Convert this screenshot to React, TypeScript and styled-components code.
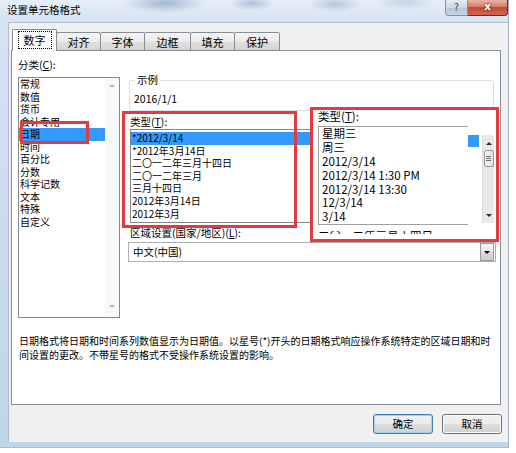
import React from "react";
import styled, { createGlobalStyle } from "styled-components";

const FONT = `"Noto Sans CJK SC", "Microsoft YaHei", "Noto Sans", sans-serif`;
const RED = "#e23a3f";
const SEL = "#3399ff";

const GlobalStyle = createGlobalStyle`
  html, body { margin: 0; padding: 0; background: #ffffff; }
  body { font-family: ${FONT}; color: #000; }
  * { box-sizing: border-box; }
`;

const Window = styled.div`
  width: 509px;
  height: 448px;
  display: flex;
  flex-direction: column;
  background:
    radial-gradient(ellipse 42px 10px at 165px 3px, rgba(110, 140, 178, 0.55), transparent),
    radial-gradient(ellipse 22px 8px at 252px 3px, rgba(110, 140, 178, 0.45), transparent),
    radial-gradient(ellipse 26px 8px at 335px 4px, rgba(110, 140, 178, 0.4), transparent),
    radial-gradient(ellipse 30px 8px at 405px 2px, rgba(140, 165, 195, 0.35), transparent),
    linear-gradient(180deg, #e6eef8 0%, #d6e3f2 20px, #c9daee 60%, #c0d4ea 100%);
  border-right: 1px solid #a3b1c2;
  border-bottom: 1px solid #a9bdd4;
`;

const TitleBar = styled.div`
  height: 22px;
  display: flex;
  align-items: flex-start;
`;

const TitleText = styled.div`
  padding-left: 7px;
  font-size: 10.5px;
  line-height: 20px;
  color: #000;
`;

const Controls = styled.div`
  margin-left: auto;
  display: flex;
`;

const HelpButton = styled.div`
  width: 23px;
  height: 16px;
  border: 1px solid #8091a8;
  border-top: none;
  border-radius: 0 0 0 4px;
  background: linear-gradient(180deg, #e6ecf3 0%, #cdd7e3 50%, #b7c5d6 51%, #c9d5e3 100%);
  color: #3d4a5c;
  font-family: "DejaVu Sans", sans-serif;
  font-size: 10px;
  line-height: 15px;
  text-align: center;
`;

const CloseButton = styled.div`
  width: 40px;
  height: 16px;
  border: 1px solid #6b2b20;
  border-left: none;
  border-top: none;
  border-radius: 0 0 4px 0;
  background: linear-gradient(180deg, #eab3a6 0%, #d77b66 45%, #c44a30 50%, #d0674c 100%);
  color: #fff;
  font-family: "DejaVu Sans", sans-serif;
  font-weight: bold;
  font-size: 11px;
  line-height: 14px;
  text-align: center;
  text-shadow: 0 0 2px #5a1a10, 0 0 1px #5a1a10;
`;

const Body = styled.div`
  flex: 1;
  margin: 0 0 5px 8px;
  background: #f0f0f0;
  border-top: 1px solid #aebdcf;
  border-left: 1px solid #aebdcf;
  padding: 6px 0 0 2px;
  display: flex;
  flex-direction: column;
`;

const TabStrip = styled.div`
  display: flex;
  align-items: flex-end;
  height: 22px;
  margin-left: 1px;
  margin-bottom: -1px;
  position: relative;
  z-index: 1;
`;

const Tab = styled.div<{ $w: number; $active?: boolean }>`
  width: ${(p) => p.$w}px;
  height: ${(p) => (p.$active ? 22 : 19)}px;
  margin-left: -1px;
  &:first-child { margin-left: 0; }
  border: 1px solid #898c95;
  border-bottom: ${(p) => (p.$active ? "none" : "1px solid #898c95")};
  border-radius: 2px 2px 0 0;
  background: ${(p) =>
    p.$active ? "#ffffff" : "linear-gradient(180deg, #f4f4f4 0%, #ebebeb 50%, #dddddd 51%, #d6d6d6 100%)"};
  display: flex;
  align-items: center;
  justify-content: center;
  font-size: 11px;
  line-height: 14px;
  position: relative;
  z-index: ${(p) => (p.$active ? 2 : 1)};
  padding-bottom: ${(p) => (p.$active ? 2 : 0)}px;
`;

const FocusText = styled.span`
  border: 1px dotted #000;
  padding: 1px 5px;
`;

const Panel = styled.div`
  position: relative;
  width: 490px;
  height: 355px;
  border: 1px solid #898c95;
  background: #ffffff;
  padding: 7px 4px 0 6px;
`;

const ContentGrid = styled.div`
  display: grid;
  grid-template-columns: 102px 1fr;
  column-gap: 8px;
  height: 260px;
`;

const Column = styled.div`
  display: flex;
  flex-direction: column;
`;

const Label = styled.div<{ $indent?: number; $gap?: number }>`
  font-size: 10.5px;
  line-height: 14px;
  margin-left: ${(p) => p.$indent ?? 0}px;
  margin-top: ${(p) => p.$gap ?? 0}px;
`;

const CategoryBox = styled.div`
  margin-top: 5px;
  height: 241px;
  border: 1px solid #828790;
  display: flex;
  background: #fff;
`;

const Items = styled.div<{ $pt?: number }>`
  flex: 1;
  padding-top: ${(p) => p.$pt ?? 0}px;
  overflow: hidden;
`;

const Item = styled.div<{ $selected?: boolean; $lh: number; $fs: number; $pl?: number }>`
  font-size: ${(p) => p.$fs}px;
  line-height: ${(p) => p.$lh}px;
  height: ${(p) => p.$lh}px;
  padding-left: ${(p) => p.$pl ?? 1}px;
  white-space: nowrap;
  background: ${(p) => (p.$selected ? SEL : "transparent")};
  color: #000;
`;

const DisabledScroll = styled.div`
  width: 14px;
  background: #f9f9f9;
  display: flex;
  flex-direction: column;
  justify-content: space-between;
  align-items: center;
  padding: 6px 0 9px;
`;

const ArrowUp = styled.span<{ $c: string }>`
  width: 0;
  height: 0;
  border-left: 3px solid transparent;
  border-right: 3px solid transparent;
  border-bottom: 3px solid ${(p) => p.$c};
`;

const ArrowDown = styled.span<{ $c: string }>`
  width: 0;
  height: 0;
  border-left: 3px solid transparent;
  border-right: 3px solid transparent;
  border-top: 3px solid ${(p) => p.$c};
`;

const SampleGroup = styled.fieldset`
  margin: 15px 2px 0 1px;
  padding: 5px 4px 4px 4px;
  border: 1px solid #dcdfe3;
  border-radius: 3px;
  min-width: 0;
`;

const SampleLegend = styled.legend`
  font-size: 10.5px;
  line-height: 14px;
  padding: 0 2px;
  margin-left: 1px;
`;

const SampleValue = styled.div`
  font-size: 10.5px;
  line-height: 14px;
`;

const TypeList = styled.div`
  margin-left: 2px;
  width: 365px;
  height: 94px;
  border: 1px solid #828790;
  display: flex;
  background: #fff;
`;

const Combo = styled.div`
  margin-top: 2px;
  height: 20px;
  border: 1px solid #abadb3;
  background: #fff;
  display: flex;
  align-items: center;
  padding: 0 1px 0 4px;
`;

const ComboText = styled.div`
  flex: 1;
  font-size: 10.5px;
  line-height: 14px;
`;

const ComboButton = styled.div`
  width: 14px;
  height: 18px;
  border: 1px solid #9c9c9c;
  background: linear-gradient(180deg, #f4f4f4 0%, #e8e8e8 50%, #d8d8d8 51%, #cfcfcf 100%);
  display: flex;
  align-items: center;
  justify-content: center;
`;

const Description = styled.div`
  margin-top: 16px;
  font-size: 10px;
  line-height: 14px;
  padding-left: 1px;
`;

const RedMark = styled.div<{ $x: number; $y: number; $w: number; $h: number }>`
  position: absolute;
  left: ${(p) => p.$x}px;
  top: ${(p) => p.$y}px;
  width: ${(p) => p.$w}px;
  height: ${(p) => p.$h}px;
  border: 3px solid ${RED};
  pointer-events: none;
`;

const Pasted = styled(RedMark)`
  background: #ffffff;
  display: flex;
  flex-direction: column;
`;

const PastedLabel = styled.div`
  font-size: 11.5px;
  line-height: 13px;
  padding-left: 5px;
`;

const PastedRow = styled.div`
  margin-top: 3px;
  display: flex;
  align-items: flex-start;
  padding-left: 5px;
`;

const PastedList = styled.div`
  width: 150px;
  height: 99px;
  border: 1px solid #a0a0a0;
  border-right: none;
  overflow: hidden;
`;

const BluePatch = styled.div`
  margin-top: 9px;
  width: 11px;
  height: 12px;
  background: ${SEL};
`;

const ActiveScroll = styled.div`
  margin-left: 3px;
  margin-top: 9px;
  width: 12px;
  height: 88px;
  background: #e8e8e8;
  border-left: 1px solid #dcdcdc;
  display: flex;
  flex-direction: column;
  align-items: center;
  padding-top: 7px;
  padding-bottom: 6px;
`;

const Thumb = styled.div`
  margin-top: 5px;
  width: 10px;
  height: 17px;
  border: 1px solid #979797;
  border-radius: 2px;
  background: linear-gradient(90deg, #f3f3f3, #e0e0e0);
  display: flex;
  flex-direction: column;
  align-items: center;
  justify-content: center;
  gap: 1px;
`;

const GripLine = styled.span`
  width: 5px;
  height: 1px;
  background: #6e6e6e;
`;

const ScrollSpacer = styled.div`
  flex: 1;
`;

const ClipLine = styled.div`
  margin-top: 6px;
  padding-left: 5px;
  height: 3px;
  overflow: hidden;
`;

const ClipText = styled.div`
  margin-top: -3px;
  font-size: 11.5px;
  line-height: 14px;
  white-space: nowrap;
`;

const ButtonRow = styled.div`
  margin-top: 9px;
  margin-right: 6px;
  display: flex;
  justify-content: flex-end;
  gap: 9px;
`;

const Button = styled.div<{ $default?: boolean }>`
  width: 60px;
  height: 20px;
  border: 1px solid ${(p) => (p.$default ? "#3c7fb1" : "#707070")};
  border-radius: 3px;
  box-shadow: ${(p) => (p.$default ? "inset 0 0 0 1px #9fd4f3" : "inset 0 0 0 1px #fbfbfb")};
  background: linear-gradient(180deg, #f2f2f2 0%, #ebebeb 50%, #dddddd 51%, #cfcfcf 100%);
  font-size: 10.5px;
  line-height: 18px;
  text-align: center;
`;

const categories = ["常规", "数值", "货币", "会计专用", "日期", "时间", "百分比", "分数", "科学记数", "文本", "特殊", "自定义"];
const types = ["*2012/3/14", "*2012年3月14日", "二〇一二年三月十四日", "二〇一二年三月", "三月十四日", "2012年3月14日", "2012年3月"];
const pastedTypes = ["星期三", "周三", "2012/3/14", "2012/3/14 1:30 PM", "2012/3/14 13:30", "12/3/14", "3/14"];
const tabs = [
  { label: "数字", w: 45 },
  { label: "对齐", w: 45 },
  { label: "字体", w: 45 },
  { label: "边框", w: 47 },
  { label: "填充", w: 45 },
  { label: "保护", w: 46 },
];

export default function App() {
  return (
    <>
      <GlobalStyle />
      <Window>
        <TitleBar>
          <TitleText>设置单元格格式</TitleText>
          <Controls>
            <HelpButton>?</HelpButton>
            <CloseButton>x</CloseButton>
          </Controls>
        </TitleBar>
        <Body>
          <TabStrip>
            {tabs.map((t, i) => (
              <Tab key={t.label} $w={t.w} $active={i === 0}>
                {i === 0 ? <FocusText>{t.label}</FocusText> : t.label}
              </Tab>
            ))}
          </TabStrip>
          <Panel>
            <ContentGrid>
              <Column>
                <Label>分类(<u>C</u>):</Label>
                <CategoryBox>
                  <Items>
                    {categories.map((c) => (
                      <Item key={c} $fs={10} $lh={12.5} $selected={c === "日期"}>
                        {c}
                      </Item>
                    ))}
                  </Items>
                  <DisabledScroll>
                    <ArrowUp $c="#b4b4b4" />
                    <ArrowDown $c="#b4b4b4" />
                  </DisabledScroll>
                </CategoryBox>
              </Column>
              <Column>
                <SampleGroup>
                  <SampleLegend>示例</SampleLegend>
                  <SampleValue>2016/1/1</SampleValue>
                </SampleGroup>
                <Label $indent={2} $gap={4}>
                  类型(<u>T</u>):
                </Label>
                <TypeList>
                  <Items $pt={2}>
                    {types.map((t, i) => (
                      <Item key={t} $fs={10} $lh={12.6} $selected={i === 0}>
                        {t}
                      </Item>
                    ))}
                  </Items>
                </TypeList>
                <Label $indent={2} $gap={3}>
                  区域设置(国家/地区)(<u>L</u>):
                </Label>
                <Combo>
                  <ComboText>中文(中国)</ComboText>
                  <ComboButton>
                    <ArrowDown $c="#000" />
                  </ComboButton>
                </Combo>
              </Column>
            </ContentGrid>
            <Description>
              日期格式将日期和时间系列数值显示为日期值。以星号(*)开头的日期格式响应操作系统特定的区域日期和时
              <br />
              间设置的更改。不带星号的格式不受操作系统设置的影响。
            </Description>

            <RedMark $x={8} $y={70} $w={69} $h={23} />
            <RedMark $x={110} $y={60} $w={175} $h={117} />
            <Pasted $x={298} $y={56} $w={189} $h={135}>
              <PastedLabel>
                类型(<u>T</u>):
              </PastedLabel>
              <PastedRow>
                <PastedList>
                  {pastedTypes.map((t) => (
                    <Item key={t} $fs={11.5} $lh={13.9} $pl={3}>
                      {t}
                    </Item>
                  ))}
                </PastedList>
                <BluePatch />
                <ActiveScroll>
                  <ArrowUp $c="#2b2b2b" />
                  <Thumb>
                    <GripLine />
                    <GripLine />
                    <GripLine />
                  </Thumb>
                  <ScrollSpacer />
                  <ArrowDown $c="#2b2b2b" />
                </ActiveScroll>
              </PastedRow>
              <ClipLine>
                <ClipText>二〇一二年三月十四日</ClipText>
              </ClipLine>
            </Pasted>
          </Panel>
          <ButtonRow>
            <Button $default>确定</Button>
            <Button>取消</Button>
          </ButtonRow>
        </Body>
      </Window>
    </>
  );
}
